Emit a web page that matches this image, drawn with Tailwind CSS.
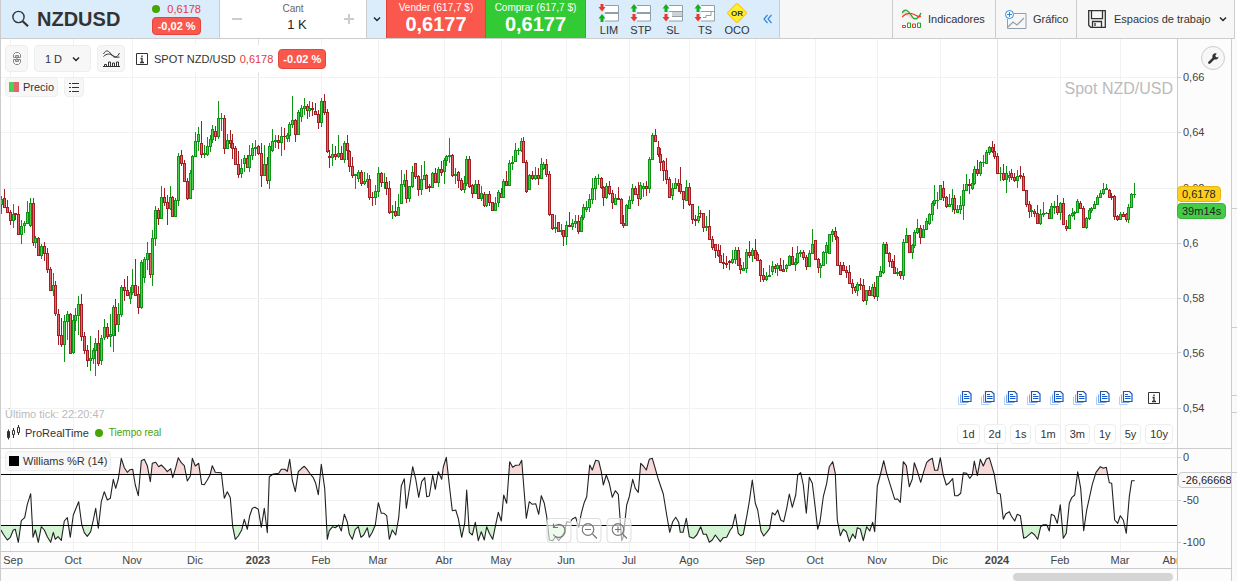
<!DOCTYPE html>
<html lang="es">
<head>
<meta charset="utf-8">
<meta name="viewport" content="width=device-width, initial-scale=1">
<title>NZDUSD</title>
<script src="https://cdn.jsdelivr.net/npm/@tailwindcss/browser@4"></script>
</head>
<body class="flex h-screen flex-col overflow-hidden bg-white font-['Liberation_Sans',Arial,sans-serif] text-[11px] leading-3 text-[#333]">

<header class="mr-0.5 flex h-[39px] flex-none border-x border-b border-[#ccc] bg-[#f7f7f7]">
  <div class="flex w-[219px] flex-none items-center border-r border-[#ccc] bg-[#dbecfb] pl-[10px]">
    <button class="flex items-center gap-2" aria-label="Buscar NZDUSD">
      <svg class="size-[18px]" viewBox="0 0 18 18" fill="none" stroke="#333"><circle cx="7.500" cy="7" r="5.600" stroke-width="1.400"/><path d="M11.700 11.200 17 16.200" stroke-width="2.200"/></svg>
      <span class="text-xl font-bold leading-6">NZDUSD</span>
    </button>
    <div class="ml-8 flex flex-col gap-0.5">
      <div class="flex items-center gap-[7px] text-[#e2383f]"><span class="size-2 rounded-full bg-[#48a400]"></span>0,6178</div>
      <span class="rounded border border-[#e2453c] bg-[#fa584d] px-[3px] py-px text-center font-bold leading-[14px] text-white">-0,02 %</span>
    </div>
  </div>
  <div class="flex w-[147px] flex-none items-center justify-between border-r border-[#ccc] bg-white px-3">
    <button aria-label="Menos"><svg class="size-[10px]" viewBox="0 0 10 10"><path d="M0 5h10" stroke="#ccc" stroke-width="2"/></svg></button>
    <label class="flex flex-col items-center text-[10px] text-[#666]">Cant
      <input class="w-16 pl-2 text-center text-[13px] leading-5 text-[#222] outline-none" value="1 K"></label>
    <button aria-label="Más"><svg class="size-[10px]" viewBox="0 0 10 10"><path d="M0 5h10M5 0v10" stroke="#ccc" stroke-width="2"/></svg></button>
  </div>
  <button class="flex w-[19px] flex-none items-center justify-center bg-[#dbecfb]" aria-label="Opciones"><svg class="size-2" viewBox="0 0 8 8" fill="none" stroke="#222" stroke-width="1.400"><path d="M1 2.500 4 5.500 7 2.500"/></svg></button>
  <button class="flex w-[100px] flex-none flex-col items-center border-x border-[#e0453c] bg-[#fa584d] pt-0.5 text-white"><span class="text-[10px]">Vender (617,7 $)</span><b class="text-xl leading-5">0,6177</b></button>
  <button class="flex w-[100px] flex-none flex-col items-center border-r border-[#2fae30] bg-[#33cb35] pt-0.5 text-white"><span class="text-[10px]">Comprar (617,7 $)</span><b class="text-xl leading-5">0,6177</b></button>
  <div class="flex w-[194px] flex-none border-r border-[#ccc] bg-[#dbecfb] pl-[7px] pt-[3px]">
    <button class="flex w-8 flex-col items-center gap-px"><svg class="h-5 w-[22px]" viewBox="0 0 22 20"><path d="M7 2.500h13.500v15.500H7" fill="#fff" stroke="#8fa0aa"/><path d="M7 10h13" stroke="#8fa0aa" stroke-width="2"/><path d="M4 1v3" stroke="#e8392f" stroke-width="3"/><path d="M.5 4h7L4 8.500z" fill="#e8392f"/><path d="M4 19v-4" stroke="#18ad20" stroke-width="3"/><path d="M.5 15.500h7L4 11z" fill="#18ad20"/></svg>LIM</button>
    <button class="flex w-8 flex-col items-center gap-px"><svg class="h-5 w-[22px]" viewBox="0 0 22 20"><path d="M7 2.500h13.500v15.500H7" fill="#fff" stroke="#8fa0aa"/><path d="M7 10h13" stroke="#8fa0aa" stroke-width="2"/><path d="M4 9v-4" stroke="#18ad20" stroke-width="3"/><path d="M.5 5.500h7L4 1z" fill="#18ad20"/><path d="M4 11v3" stroke="#e8392f" stroke-width="3"/><path d="M.5 14h7L4 18.500z" fill="#e8392f"/></svg>STP</button>
    <button class="flex w-8 flex-col items-center gap-px"><svg class="h-5 w-[22px]" viewBox="0 0 22 20"><path d="M7 2.500h13.500v15.500H7" fill="#fff" stroke="#8fa0aa"/><path d="M10 9h10v4H10z" fill="#ccd3d6"/><path d="M7 8.500h13M10 13.500h10" stroke="#8fa0aa"/><path d="M4 9v-4" stroke="#18ad20" stroke-width="3"/><path d="M.5 5.500h7L4 1z" fill="#18ad20"/><path d="M4 11v3" stroke="#e8392f" stroke-width="3"/><path d="M.5 14h7L4 18.500z" fill="#e8392f"/></svg>SL</button>
    <button class="flex w-8 flex-col items-center gap-px"><svg class="h-5 w-[22px]" viewBox="0 0 22 20"><path d="M7 2.500h13.500v15.500H7" fill="#fff" stroke="#8fa0aa"/><path d="M7 8.500h13M9 14.500h3v-2h5v-4" fill="none" stroke="#8fa0aa"/><path d="M4 9v-4" stroke="#18ad20" stroke-width="3"/><path d="M.5 5.500h7L4 1z" fill="#18ad20"/><path d="M4 11v3" stroke="#e8392f" stroke-width="3"/><path d="M.5 14h7L4 18.500z" fill="#e8392f"/></svg>TS</button>
    <button class="flex w-8 flex-col items-center gap-px"><svg class="h-5 w-[22px]" viewBox="0 0 22 20"><rect x="4" y="3" width="14" height="14" rx="1.500" transform="rotate(45 11 10)" fill="#fff02c" stroke="#ffc21a"/><text x="11" y="13" text-anchor="middle" font-size="8" font-weight="bold" fill="#333">OR</text></svg>OCO</button>
    <button class="ml-1 flex h-8 w-5 items-center justify-center" aria-label="Contraer"><svg class="h-[10px] w-[9px]" viewBox="0 0 9 10" fill="none" stroke="#2f86dd" stroke-width="1.200"><path d="M4.500 1 1 5l3.500 4M8.500 1 5 5l3.500 4"/></svg></button>
  </div>
  <div class="flex-1"></div>
  <button class="flex w-[103px] flex-none items-center gap-1.5 border-l border-[#ccc] pl-[9px]">
    <svg class="size-5 flex-none" viewBox="0 0 20 20" fill="none"><path d="M0 3C3-1 6 1 9 5s6 6 10-2v5C15 12 11 12 8 9S3 5 0 8z" fill="#e8392f" fill-opacity=".15"/><path d="M0 4C3-1 6 1 9 6s6 6 10-2" stroke="#18ad20" stroke-width="1.300"/><path d="M0 8C4 4 8 4 11 5s5 4 8 2" stroke="#e8392f" stroke-width="1.200"/><path d="M.5 18.500v-2h3v2zM10.500 18.500v-3.500h3v3.500z" stroke="#e8392f"/><path d="M5.500 18.500v-4.500h3v4.500zM15.500 18.500v-4.500h3v4.500z" stroke="#18ad20"/></svg>Indicadores</button>
  <button class="flex w-[81px] flex-none items-center gap-1.5 border-l border-[#ccc] pl-[9px]">
    <svg class="h-[19px] w-[22px] flex-none" viewBox="0 0 22 19" fill="none"><path d="M9 3.500h12v15H2.500V9" stroke="#8fa0aa"/><path d="M3 17l5-5 4 3 7-7" stroke="#8fa0aa" stroke-width="1.200"/><circle cx="4.500" cy="4.500" r="4" fill="#fff" stroke="#2f86dd"/><path d="M2 4.500h5M4.500 2v5" stroke="#2f86dd"/></svg>Gráfico</button>
  <button class="flex w-[158px] flex-none items-center border-l border-[#ccc] pl-[11px]">
    <svg class="mr-2 size-[18px] flex-none" viewBox="0 0 18 18" fill="none" stroke="#333" stroke-width="1.300"><path d="M.7.7h16.600v16.600H2.700l-2-2zM3.500.7v8h11v-8M4.500 17v-5.500h9V17M7 13v3"/></svg>Espacios de trabajo
    <svg class="ml-2 size-2" viewBox="0 0 8 8" fill="none" stroke="#222" stroke-width="1.400"><path d="M1 2.500 4 5.500 7 2.500"/></svg></button>
</header>

<main class="grid min-h-0 flex-1 grid-cols-[minmax(0,1fr)_54px_6px] grid-rows-[minmax(0,1fr)_103px_17px_12px]">

  <section class="relative min-h-0 border-b border-l border-[#ccc]" aria-label="Precio">
    <svg id="price" class="absolute inset-0 size-full" viewBox="1 39 1176 409" preserveAspectRatio="none" shape-rendering="crispEdges"></svg>
    <div class="absolute left-1 top-[6px] flex items-center">
      <button class="mr-1.5 flex h-[27px] w-[23px] items-center justify-center rounded border border-[#eee] bg-[#f7f7f7]" aria-label="Vincular"><svg class="h-[13px] w-2" viewBox="0 0 8 13" fill="none" stroke="#888"><path d="M.5 5.500v-3l2-2h3l2 2v3zM2.500 5.500v-2h3v2M.5 7.500v3l2 2h3l2-2v-3zM2.500 7.500v2h3v-2M4 3.500v6"/></svg></button>
      <button class="mr-1.5 flex h-[27px] w-[57px] items-center justify-center gap-2.5 rounded border border-[#eee] bg-[#f7f7f7]">1 D<svg class="size-2" viewBox="0 0 8 8" fill="none" stroke="#222" stroke-width="1.400"><path d="M1 2.500 4 5.500 7 2.500"/></svg></button>
      <button class="mr-2 flex h-[27px] w-7 items-center justify-center rounded border border-[#eee] bg-[#f7f7f7]" aria-label="Indicadores del gráfico"><svg class="size-[17px]" viewBox="0 0 17 17" fill="none" stroke="#333"><path d="M.5 4C3-1 6 1 8 4s5 6 8.500-1M.5 6.500C4 3 7 4 9 5s4 3 7.500 2M1.500 16v-1.500h2V16M5.500 16v-4h2v4M9.500 16v-3h2v3M13.500 16v-4h2v4M0 16.500h17"/></svg></button>
      <div class="flex h-[27px] items-center bg-white pl-[3px] pr-1">
        <svg class="mr-1.5 size-3" viewBox="0 0 12 12" fill="none" stroke="#333"><path d="M.5.5h11v11H.5z"/><path d="M6 2.500v1.500M4.500 5.500H6V9M4 9.500h4" stroke-width="1.400"/></svg>
        SPOT NZD/USD <span class="ml-1 text-[#e2383f]">0,6178</span>
        <span class="ml-[5px] rounded border border-[#e2453c] bg-[#fa584d] px-1 font-bold leading-[18px] text-white">-0.02 %</span>
      </div>
    </div>
    <div class="absolute left-1 top-[38px] flex gap-1.5">
      <button class="flex h-5 items-center gap-1 rounded border border-[#eee] bg-[#f7f7f7] px-[3px]"><span class="flex size-[10px]"><i class="flex-1 bg-[#4fd052]"></i><i class="flex-1 bg-[#e0676b]"></i></span>Precio</button>
      <button class="flex h-5 w-5 items-center justify-center rounded border border-[#eee] bg-[#f7f7f7]" aria-label="Lista"><svg class="h-[9px] w-[10px]" viewBox="0 0 10 9" stroke="#333" shape-rendering="crispEdges"><path d="M0 .5h2M3 .5h7M0 4.500h2M3 4.500h7M0 8.500h2M3 8.500h7"/></svg></button>
    </div>
    <h1 class="absolute right-1 top-10 text-base leading-5 text-[#bbb]">Spot NZD/USD</h1>
    <div class="absolute bottom-2 left-1 flex flex-col gap-[5px]">
      <span class="text-[#bbb]">Último tick: 22:20:47</span>
      <div class="flex items-center"><svg class="ml-0.5 mr-1 h-[15px] w-[14px]" viewBox="0 0 14 15" fill="#fff" stroke="#333"><path d="M1.500 4.500v10M6.500 3v10M11.500 0v10"/><path d="M.5 6.500h2v6h-2z" fill="#333"/><path d="M5.500 5.500h2v4h-2zM10.500 2.500h2v5h-2z"/></svg>ProRealTime<span class="ml-1.5 mr-1.5 size-2 rounded-full bg-[#48a400]"></span><span class="text-[10px] text-[#48a400]">Tiempo real</span></div>
    </div>
    <div id="news" class="absolute bottom-[43px] right-[17px] flex items-center gap-[9px]"></div>
    <div class="absolute bottom-1 right-1 flex gap-1">
      <button class="h-5 rounded border border-[#eee] bg-white/80 px-1">1d</button>
      <button class="h-5 rounded border border-[#eee] bg-white/80 px-1">2d</button>
      <button class="h-5 rounded border border-[#eee] bg-white/80 px-1">1s</button>
      <button class="h-5 rounded border border-[#eee] bg-white/80 px-1">1m</button>
      <button class="h-5 rounded border border-[#eee] bg-white/80 px-1">3m</button>
      <button class="h-5 rounded border border-[#eee] bg-white/80 px-1">1y</button>
      <button class="h-5 rounded border border-[#eee] bg-white/80 px-1">5y</button>
      <button class="h-5 rounded border border-[#eee] bg-white/80 px-1">10y</button>
    </div>
  </section>
  <aside id="priceAxis" class="relative border-b border-l border-[#ccc] bg-[#fcfcfc]">
    <button class="absolute right-1.5 top-[7px] z-10 flex size-6 items-center justify-center rounded-full border border-[#ccc] bg-[#f7f7f7]" aria-label="Configuración"><svg class="size-[11px]" viewBox="0 0 12 12"><path d="M1.500 10.500 7 5" stroke="#333" stroke-width="2.800" stroke-linecap="round"/><path d="M9.500.6A3.400 3.400 0 1 0 11.500 4l-2 .8-1.700-1.500z" fill="#333"/></svg></button>
  </aside>
  <div class="row-span-4 flex flex-col border-l border-[#ccc] bg-[#fafafa]">
    <i class="h-[170px] border-b border-[#ccc]"></i><i class="h-[119px] border-b border-[#ccc]"></i><i class="h-[68px] border-b border-[#ccc]"></i><i class="h-[17px] border-b border-[#ccc]"></i><i class="h-[60px] border-b border-[#ccc]"></i>
  </div>

  <section class="relative border-b border-l border-[#ccc]" aria-label="Williams %R">
    <svg id="osc" class="absolute inset-0 size-full" viewBox="1 449 1176 102" preserveAspectRatio="none"></svg>
    <div class="absolute left-1 top-[2px] flex h-5 items-center gap-1 rounded border border-[#eee] bg-[#f7f7f7]/90 px-[3px]"><span class="size-[10px] bg-black"></span>Williams %R (14)</div>
    <div class="absolute bottom-2 left-1/2 flex -translate-x-1/2 gap-[5px]">
      <button class="flex size-[25px] items-center justify-center rounded border border-[#ddd] bg-white/60" aria-label="Restablecer"><svg class="size-4" viewBox="0 0 16 16" fill="none" stroke="#777" stroke-width="1.200"><path d="M2 4a6.500 6.500 0 1 1-.3 7.500M2 .5V4.500h4.500"/></svg></button>
      <button class="flex size-[25px] items-center justify-center rounded border border-[#ddd] bg-white/60" aria-label="Alejar"><svg class="size-4" viewBox="0 0 16 16" fill="none" stroke="#777" stroke-width="1.200"><circle cx="6.500" cy="6.500" r="5.800"/><path d="M3.500 6.500h6M11 11l4.500 4.500"/></svg></button>
      <button class="flex size-[25px] items-center justify-center rounded border border-[#ddd] bg-white/60" aria-label="Acercar"><svg class="size-4" viewBox="0 0 16 16" fill="none" stroke="#777" stroke-width="1.200"><circle cx="6.500" cy="6.500" r="5.800"/><path d="M3.500 6.500h6M6.500 3.500v6M11 11l4.500 4.500"/></svg></button>
    </div>
  </section>
  <aside id="oscAxis" class="relative overflow-hidden border-l border-[#ccc] bg-[#fcfcfc]"></aside>

  <div id="dates" class="relative overflow-hidden border-b border-l border-[#ccc] bg-[#fcfcfc] text-[#444]"></div>
  <div class="border-b border-l border-[#ccc] bg-[#fcfcfc]"></div>

  <div class="flex justify-end border-l border-[#ccc] bg-[#fcfcfc] pr-1 pt-1"><div class="h-2 w-40 rounded-full bg-[#d5d5d5]"></div></div>
  <div class="border-l border-[#ccc] bg-[#fcfcfc]"></div>
</main>

<script>
// Candle runs: origin of the run, then "x high top bottom low colour" in thirds of a pixel.
const runs = [
[0,180,`4 48 58 74 104 g,13 27 55 82 85 r,22 60 82 97 97 r,31 90 97 121 137 r,40 72 103 121 146 g,46 100 100 103 121 r,55 80 103 163 163 r,64 120 139 163 192 g,73 124 130 136 160 g,82 63 97 130 130 g,91 55 70 136 143 g,100 55 70 187 200 r,106 168 175 187 206 g,115 172 175 226 226 r,124 193 199 226 237 g,133 187 199 220 244 r,142 205 220 268 280 r,151 262 268 331 331 r,160 280 316 331 349 g,166 305 316 401 410 r,175 388 403 466 497 r,184 415 466 493 503 r,193 407 424 493 548 g,202 393 403 424 480 g,211 400 403 520 524 r,220 407 421 517 524 g,226 385 405 421 455 g,235 348 373 407 466 g,244 342 373 469 484 r,253 458 469 511 523 r,262 495 511 542 562 r,271 470 535 542 574 g,280 505 511 535 552 g,286 475 490 511 590 g,295 450 490 550 560 r,304 467 475 541 557 g,313 418 442 472 480 g,322 430 442 470 478 r,331 402 463 470 503 g,340 375 382 465 518 g,346 358 382 433 470 r,355 370 403 433 458 g,364 317 322 403 413 g,373 297 322 332 364 r,382 290 332 346 347 r,391 323 337 355 374 g,397 267 317 337 345 g,406 237 317 345 350 r,415 320 343 382 403 r,424 240 247 382 388 g,433 233 238 292 310 g,442 188 220 238 270 g,451 220 220 284 295 r,457 152 175 284 320 g,466 80 91 175 200 g,475 85 91 115 135 r,484 18 52 115 118 g,493 25 52 67 80 r,502 45 67 85 135 r,511 20 52 85 90 g,517 50 52 109 113 r,526 55 60 109 109 g,535 -80 -72 60 80 g,544 -90 -75 -50 -40 r,553 -60 -50 3 5 r,562 -5 3 55 60 r`],
[190,90,`1 240 250 325 325 g,7 195 199 298 298 g,16 127 154 199 202 g,25 112 133 154 184 g,34 94 160 193 206 r,43 166 190 193 205 g,52 141 169 193 200 g,61 136 148 170 187 g,67 106 118 148 160 g,76 109 124 140 155 r,85 34 85 140 149 g,94 70 85 86 125 g,103 75 85 175 194 r,112 132 151 175 175 g,121 120 151 160 174 r,127 132 160 175 209 r,136 170 175 223 227 r,145 184 223 253 266 r,154 207 235 250 265 g,163 197 205 220 247 g,172 195 205 232 235 r,178 166 196 232 246 g,187 161 175 196 212 g,196 150 172 176 200 g,205 165 170 190 196 r,214 160 190 256 293 r,223 165 223 256 256 g,232 202 223 271 284 r,238 160 169 271 299 g,247 117 154 181 187 g,256 135 150 154 176 g,265 137 151 157 178 r,274 112 139 157 198 g,283 115 139 140 180 r,292 130 136 146 156 g,298 97 103 136 156 g,307 18 91 103 115 g,316 87 91 133 156 r,325 62 67 133 133 g,334 45 55 79 97 g,343 25 49 55 76 g,352 42 49 61 87 r,358 33 55 61 81 g,367 37 55 59 78 r,376 40 65 73 76 r,385 60 72 97 118 r,394 25 34 97 112 g,403 12 34 67 75 r,412 58 67 185 190 r,418 180 199 202 234 r,427 163 193 202 230 g,436 170 193 200 212 r,445 136 190 199 205 g,454 170 190 208 212 r,463 153 160 208 220 g,472 135 160 182 210 r,478 180 184 229 248 r,487 202 229 256 265 r,496 252 254 257 298 g,505 240 247 265 277 g,514 240 247 280 290 r,523 248 274 280 287 g,532 250 268 275 294 g,538 257 268 323 332 r,547 308 322 323 350 r,556 286 304 323 347 g,565 231 250 304 322 g,574 247 250 277 293 r,583 250 276 277 298 g,589 262 277 295 315 r,598 273 295 368 372 r,607 345 364 368 389 g,616 333 364 377 383 r,625 313 352 377 380 g`],
[390,120,`34 150 193 250 253 g,43 162 181 193 202 g,49 150 181 235 250 r,58 198 199 235 247 g,67 138 157 199 206 g,76 130 130 169 178 r,85 166 169 208 230 r,94 136 178 208 226 g,103 123 166 178 178 g,109 163 166 205 208 r,118 192 199 203 218 r,127 157 160 202 203 g,136 145 160 187 190 r,145 143 148 187 202 g,154 123 148 157 170 r,163 115 121 154 194 g,169 105 109 121 140 g,178 54 106 109 130 g,187 102 106 166 173 r,196 145 163 166 194 g,205 154 157 181 206 r,214 175 181 208 215 r,223 168 190 208 220 g,229 108 118 190 200 g,238 108 118 199 206 r,247 193 196 220 235 r,256 182 193 220 220 g,265 182 193 235 238 r,274 200 220 235 245 g,283 218 223 257 263 r,289 222 223 257 263 g,298 213 223 247 258 r,307 246 248 271 275 r,316 233 250 271 273 g,325 212 217 247 263 g,334 205 220 232 235 r,340 178 184 232 233 g,349 154 184 196 199 r,358 121 130 196 196 g,367 108 127 130 150 g,376 69 91 124 128 g,385 84 91 92 106 g,394 55 64 91 98 g,400 51 64 127 130 r,409 120 127 214 219 r,418 163 166 208 212 g,427 153 166 176 180 r,436 141 166 175 180 g,445 146 166 176 197 r,454 114 133 175 178 g,460 126 133 145 150 g,469 118 133 163 172 r,478 155 163 284 290 r,487 283 283 326 332 r,496 287 323 326 341 g,505 306 307 335 338 r,514 312 332 335 347 g,520 330 332 350 380 r,529 303 317 350 375 g,538 276 316 320 323 r,547 297 310 320 332 g,556 285 304 310 325 g,565 285 304 334 342 r,574 285 292 334 338 g,580 252 262 292 300 g,589 243 262 268 277 g,598 222 238 262 278 g,607 175 205 238 252 g,616 170 175 205 240 g,625 162 174 175 196 g,634 172 175 202 207 r`],
[600,120,`10 198 202 232 258 r,19 189 199 232 238 g,28 183 199 220 226 r,37 210 220 247 269 r,46 222 235 253 254 g,55 202 235 238 241 r,64 236 238 310 312 r,70 285 310 317 326 r,79 252 256 317 318 g,88 228 241 265 268 g,97 193 205 241 252 g,106 198 205 223 225 r,115 186 223 235 258 r,121 186 196 235 240 g,130 189 199 205 232 g,139 184 199 205 230 r,148 112 118 205 219 g,157 39 46 118 120 g,166 27 46 65 67 r,175 64 82 103 112 r,181 84 103 127 153 r,190 120 124 151 183 r,199 114 151 178 192 r,208 172 178 232 234 r,217 190 205 227 240 g,226 175 190 205 208 g,235 177 190 196 216 r,241 141 193 214 223 r,250 213 214 238 267 r,259 180 202 241 245 g,268 190 202 253 259 r,277 252 253 298 312 r,286 287 298 300 318 r,295 258 289 301 310 g,301 271 280 281 295 r,310 279 280 322 337 r,319 288 319 322 333 g,328 270 319 358 360 r,337 348 358 383 390 r,346 372 373 391 414 r,355 373 391 406 411 r,361 375 406 428 430 r,370 400 427 431 447 r,379 410 430 433 444 r,388 420 423 427 452 r,397 390 418 428 432 g,406 381 391 418 433 g,415 383 391 436 438 r,421 414 436 448 462 r,430 428 445 452 455 g,439 387 397 445 460 g,448 363 397 406 416 r,457 384 391 406 426 g,466 357 391 416 418 r,472 398 403 421 422 r,481 418 421 467 486 r,490 446 467 479 486 r,499 456 469 479 483 g,508 435 466 469 471 g,517 423 439 455 466 g,526 432 439 446 459 r,532 430 436 445 468 g,541 414 436 451 453 r,550 420 448 455 455 r,559 432 436 446 456 g,568 405 409 436 440 g,577 381 409 433 434 r,586 415 427 433 453 g,592 378 400 427 434 g`],
[780,130,`61 360 367 370 383 g,70 360 367 382 390 r,79 376 382 409 422 r,88 360 370 409 411 g,97 297 343 370 372 g,106 330 331 388 390 r,115 386 388 412 431 r,121 399 406 412 444 g,130 363 367 406 409 g,139 336 346 367 402 g,148 312 313 370 372 g,157 297 304 313 338 g,166 291 304 320 332 r,172 318 322 406 408 r,181 396 406 433 435 r,190 397 406 421 423 r,199 408 421 428 444 r,208 405 427 460 462 r,217 448 460 472 492 r,226 470 472 482 489 r,232 457 463 482 498 g,241 445 463 466 480 r,250 448 466 512 516 r,259 480 481 512 525 g,268 470 481 496 498 r,277 464 472 496 500 g,283 457 472 499 507 r,292 438 439 499 513 g,301 408 424 439 443 g,310 336 343 427 432 g,319 336 343 370 372 r,328 366 370 394 411 r,337 387 394 412 416 r,343 376 412 430 432 r,352 416 427 430 438 g,361 423 424 436 447 r,370 328 337 436 450 g,379 294 316 337 340 g,388 315 316 367 369 r,397 342 346 367 387 g,403 302 307 346 356 g,412 267 295 307 312 g,421 285 295 322 342 r,430 285 298 322 324 g,439 264 274 298 302 g,448 249 253 280 286 g,457 213 220 253 273 g,463 165 211 220 228 g,472 187 211 212 237 g,481 165 166 208 212 g,490 153 175 202 213 r,499 198 202 229 234 r,508 192 223 229 232 g,517 177 205 223 246 g,523 195 205 238 252 r,532 225 238 247 251 g,541 198 226 238 252 g,550 162 181 226 270 g,559 132 163 181 184 g,568 147 163 166 192 r,577 129 160 175 180 g,583 109 118 160 165 g,592 90 118 130 140 r,601 94 97 130 140 g,610 75 97 98 111 g,619 60 67 100 103 g,628 48 52 67 76 g,637 33 52 64 69 r,643 43 64 79 87 r,652 70 79 130 130 r`],
[980,130,`61 112 130 130 154 g,70 103 130 149 153 r,79 109 130 149 189 g,88 124 136 142 157 g,94 118 130 142 150 r,103 130 142 151 156 r,112 120 139 151 175 g,121 109 135 139 148 r,130 130 139 181 184 r,139 180 181 223 232 r,148 213 223 244 264 r,154 225 240 244 262 g,163 237 244 249 262 r,172 226 249 280 283 r,181 237 253 280 285 g,190 216 250 253 262 g,199 247 249 250 253 g,208 237 249 265 265 r,214 220 229 265 265 g,223 213 228 231 253 g,232 195 229 247 255 r,241 216 220 247 271 g,250 205 220 283 285 r,259 270 289 295 305 r,268 253 256 295 297 g,277 235 250 256 262 g,283 243 247 250 271 g,292 208 213 247 250 g,301 213 220 235 237 r,310 230 235 292 295 r,319 261 265 292 297 g,328 235 240 265 270 g,334 232 235 240 250 g,343 213 222 235 237 g,352 196 202 223 225 g,361 181 190 202 204 g,370 160 177 190 195 g,379 162 175 178 180 g,388 178 180 202 204 r,394 190 198 202 210 r,403 195 199 259 270 r,412 256 259 268 273 r,421 247 253 268 270 g,430 247 253 260 262 r,439 250 253 268 276 r,445 222 232 268 280 g,454 190 193 232 234 g,463 160 193 194 204 g`]
];
// Oscillator runs, same units: "x y".
const osc = [
[0,400,`3 390,10 403,22 420,31 412,40 390,46 388,55 427,64 362,74 353,82 313,92 281,99 412,106 390,115 427,124 380,133 390,142 410,152 427,160 397,166 418,174 410,184 421,193 363,202 353,211 412,220 345,228 325,236 305,245 373,253 398,262 409,272 395,280 360,287 325,295 385,304 305,313 275,322 300,331 295,340 238,347 265,355 237,364 175,373 203,382 217,390 209,398 208,406 255,415 287,424 182,433 178,442 197,451 245,457 190,467 187,476 200,484 195,494 205,502 215,512 206,518 233,527 203,535 173,544 188,553 197,562 243,571 228,577 175,586 198,596 190,605 253,613 254,622 240,630 225,637 197,646 217,664 218,673 295,682 275,691 293,698 380,706 418,715 408,725 390,733 358,742 388,749 347,757 325,765 322,775 328,784 382,793 325,802 398,808 230,820 222,836 220,844 208,854 208,862 214,869 178,877 240,886 275,895 215,905 205,913 199,922 209,931 222,940 233,947 250,955 284,964 193,974 265,982 418,988 392,998 380,1006 383,1016 375,1024 393,1033 343,1042 366,1048 402,1057 418,1066 388,1075 380,1083 412,1091 405,1102 383,1108 412,1117 397,1126 375,1135 308,1144 340,1152 340,1160 347,1168 418,1177 390,1187 405,1196 353,1204 257,1213 236,1219 325,1228 267`],
[410,445,`8 65,17 102,26 157,35 110,44 98,50 155,58 153,68 90,76 133,85 80,95 103,100 66,109 37,118 120,127 197,137 195,145 220,155 277,164 235,170 135,178 262,187 270,196 232,205 287,214 260,223 285,230 245,238 265,248 283,256 245,265 202,274 228,281 150,290 175,299 50,308 67,317 61,328 60,335 46,349 220,358 170,367 178,377 176,386 208,394 152,403 175,410 215,418 285,428 287,437 275,446 287,455 275,463 262,470 230,480 232,487 222,497 217,506 247,514 205,522 175,530 155,539 60,547 75,557 46,566 48,574 80,580 120,589 90,598 115,607 157,616 137,625 148,635 287,640 275,650 180,658 155,668 103,676 130,685 142,692 55,700 63,709 75,718 43,727 40,735 68,745 103,760 147,770 210,779 262,788 230,797 217,806 232,811 262,819 262,829 220,838 275,850 280,860 270,872 245,880 268,889 268,898 292,907 285,916 270,931 290,940 278,950 277,961 255,967 247,976 208,985 265,992 272,1000 268,1010 215,1018 170,1027 105,1036 175,1043 195,1053 258,1061 273,1070 262,1079 250,1087 203,1095 210,1103 195,1112 225,1121 230,1130 190,1138 147,1147 187,1157 150,1163 90,1172 83,1180 120,1189 205,1198 97,1207 115,1216 190,1223 253`],
[820,380,`0 425,10 350,20 310,28 260,38 245,46 280,52 420,61 467,70 448,79 455,88 485,98 462,106 475,112 443,121 447,130 482,140 440,149 453,158 427,164 455,172 318,181 285,191 242,200 280,224 358,233 357,241 367,250 245,259 257,268 320,277 297,283 248,292 273,302 307,311 275,320 247,328 240,337 235,344 271,353 271,361 233,370 285,379 315,388 308,398 296,404 347,413 347,422 340,430 278,440 280,449 295,457 285,463 243,472 287,481 238,490 258,499 237,508 233,517 263,523 283,532 340,541 342,550 418,557 402,568 395,574 408,584 423,592 403,601 407,611 475,618 472,635 457,644 465,653 478,662 440,670 434,680 434,688 453,694 403,703 407,712 430,721 374,730 475,739 460,748 370,755 353,764 345,773 275,782 325,791 452,800 390,817 313,828 277,841 260,850 265,859 262,868 308,875 310,884 420,893 430,901 407,910 420,919 460,928 350,935 302,944 302`]
];
const months = [[10,'Sep'],[73,'Oct'],[132,'Nov'],[195,'Dic'],[258,'2023'],[321,'Feb'],[378,'Mar'],[444,'Abr'],[501,'May'],[566,'Jun'],[629,'Jul'],[689,'Ago'],[755,'Sep'],[815,'Oct'],[877,'Nov'],[940,'Dic'],[997,'2024'],[1060,'Feb'],[1120,'Mar'],[1171,'Abr']];
const prices = [[77,'0,66'],[132,'0,64'],[188,'0,62'],[243,'0,6'],[298,'0,58'],[353,'0,56'],[408,'0,54']];
const levels = [[457,'0'],[500,'-50'],[542,'-100']];
const isYear = t => t.startsWith('20');
const px = v => Math.floor(v / 3);

const vGrid = (y, h) => months.slice(0, 19).map(([x, t]) => `<rect x="${x}" y="${y}" width="1" height="${h}" fill="${isYear(t) ? '#e2e2e2' : '#f2f2f2'}"/>`).join('');
const hGrid = rows => rows.map(([y, t]) => `<rect x="1" y="${y}" width="1176" height="1" fill="${t === '0,6' ? '#e6e6e6' : '#f2f2f2'}"/>`).join('');

let out = vGrid(39, 409) + hGrid(prices);
for (const [ox, oy, list] of runs) for (const c of list.split(',')) {
  const p = c.split(' '), up = p[5] === 'g';
  const x = ox + px(p[0]), [h, t, b, l] = p.slice(1, 5).map(v => oy + px(v));
  const dark = up ? '#0f9416' : '#a31f24', light = up ? '#4fd052' : '#e0676b';
  out += `<rect x="${x}" y="${h}" width="1" height="${Math.max(l - h, 1)}" fill="${dark}"/><rect x="${x - 1}" y="${t}" width="3" height="${b - t + 1}" fill="${dark}"/>`;
  if (b - t > 1) out += `<rect x="${x}" y="${t + 1}" width="1" height="${b - t - 1}" fill="${light}"/>`;
}
document.getElementById('price').innerHTML = out;

const pts = osc.flatMap(([ox, oy, list]) => list.split(',').map(c => { const [x, y] = c.split(' '); return [ox + x / 3, oy + y / 3]; }));
const line = pts.map(p => p[0].toFixed(1) + ' ' + p[1].toFixed(1)).join('L');
const last = pts[pts.length - 1][0].toFixed(1);
document.getElementById('osc').innerHTML = `<defs><clipPath id="hi"><rect x="1" y="449" width="1176" height="25"/></clipPath><clipPath id="lo"><rect x="1" y="526" width="1176" height="25"/></clipPath></defs>
<g shape-rendering="crispEdges">${vGrid(449, 102)}${hGrid(levels)}</g>
<path d="M1 474L${line}L${last} 474Z" fill="#f8d9d9" clip-path="url(#hi)"/><path d="M1 526L${line}L${last} 526Z" fill="#d3f4d3" clip-path="url(#lo)"/>
<path d="M${line}" fill="none" stroke="#222" stroke-width="1.1" stroke-linejoin="round"/>
<path d="M1 474.5H1177M1 525.5H1177" stroke="#000" shape-rendering="crispEdges"/>`;

const tick = (y, t, top, h) => `<div class="absolute left-0 flex -translate-y-1/2 items-center gap-0.5 text-[#444]" style="top:${(y - top) / h * 100}%"><i class="h-px w-[3px] bg-[#ccc]"></i>${t}</div>`;
document.getElementById('priceAxis').insertAdjacentHTML('beforeend', prices.map(p => tick(p[0], p[1], 39, 409)).join('') +
  `<div class="absolute -left-px -translate-y-1/2 rounded border border-[#eeb211] bg-[#fbd01b] px-1 leading-[14px] text-[#222]" style="top:${(194 - 39) / 4.09}%">0,6178</div>
   <div class="absolute -left-px -translate-y-1/2 rounded border border-[#38b43b] bg-[#45cb48] px-1 leading-[14px] text-[#222]" style="top:${(211 - 39) / 4.09}%">39m14s</div>`);
document.getElementById('oscAxis').innerHTML = levels.map(p => tick(p[0], p[1], 449, 103)).join('') +
  `<div class="absolute left-0 -translate-y-1/2 rounded-l border border-[#ccc] bg-[#f9f9f9] pl-[3px] pr-4 leading-[14px] text-[#222]" style="top:${(480 - 449) / 1.03}%">-26,66668</div>`;
document.getElementById('dates').innerHTML = months.map(([x, t], i) => `<span class="absolute top-0.5 -translate-x-1/2${isYear(t) ? ' font-bold' : ''}" style="left:${((i ? x : 13) - 1) / 11.76}%">${t}</span>`).join('');

const doc = '<button aria-label="Noticia"><svg class="size-[14px]" viewBox="0 0 14 14" fill="#fff"><path d="M.5 5.500v8h8" stroke="#b3cdf3"/><path d="M2.500 3.500v8h8" stroke="#7ba7e8"/><path d="M4.500.5h6l2.500 2.500v7.500H4.500z" stroke="#1557c8" stroke-width="1.200"/><path d="M6 3.500h3M6 5.500h5.500M6 7.500h5.500" stroke="#1557c8"/></svg></button>';
document.getElementById('news').innerHTML = doc.repeat(8) + '<button class="ml-1.5" aria-label="Información"><svg class="size-3" viewBox="0 0 12 12" fill="none" stroke="#333"><path d="M.5.5h11v11H.5z"/><path d="M6 2.500v1.500M4.500 5.500H6V9M4 9.500h4" stroke-width="1.400"/></svg></button>';
</script>
</body>
</html>
